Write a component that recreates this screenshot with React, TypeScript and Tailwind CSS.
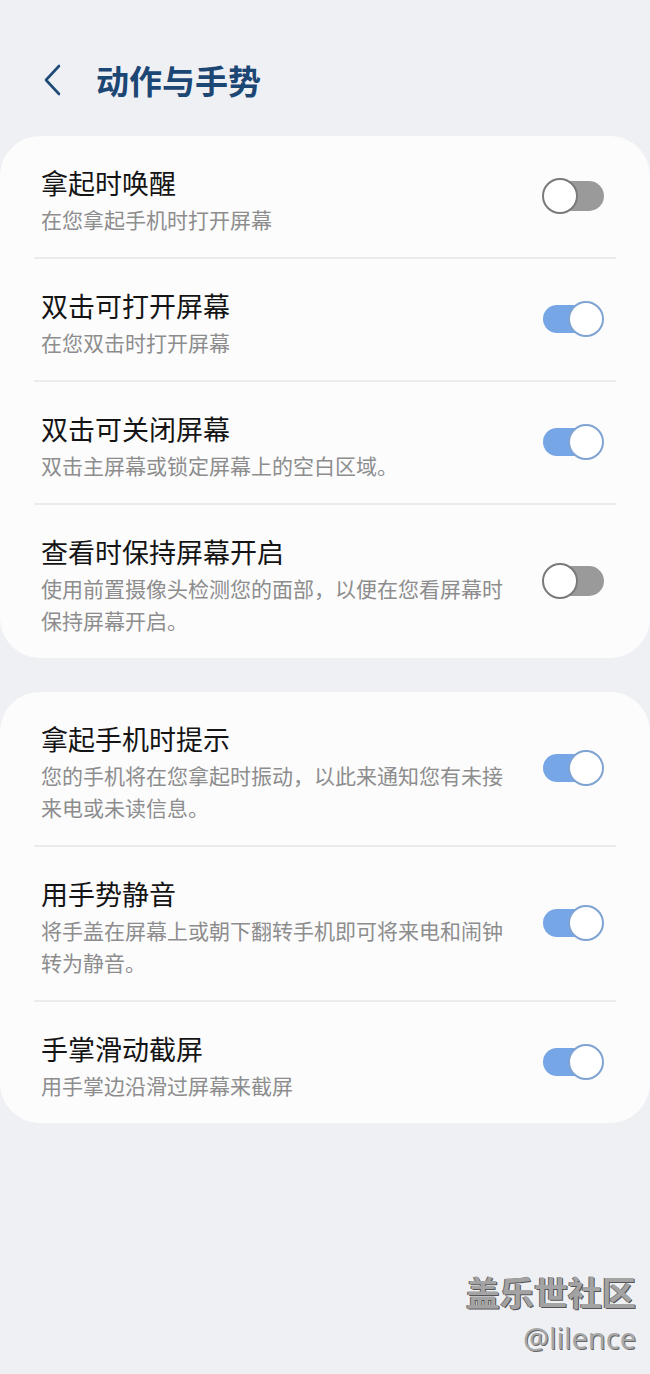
import React from "react";

type Item = { title: string; desc: string; on: boolean };

const group1: Item[] = [
  { title: "拿起时唤醒", desc: "在您拿起手机时打开屏幕", on: false },
  { title: "双击可打开屏幕", desc: "在您双击时打开屏幕", on: true },
  { title: "双击可关闭屏幕", desc: "双击主屏幕或锁定屏幕上的空白区域。", on: true },
  { title: "查看时保持屏幕开启", desc: "使用前置摄像头检测您的面部，以便在您看屏幕时保持屏幕开启。", on: false },
];

const group2: Item[] = [
  { title: "拿起手机时提示", desc: "您的手机将在您拿起时振动，以此来通知您有未接来电或未读信息。", on: true },
  { title: "用手势静音", desc: "将手盖在屏幕上或朝下翻转手机即可将来电和闹钟转为静音。", on: true },
  { title: "手掌滑动截屏", desc: "用手掌边沿滑过屏幕来截屏", on: true },
];

function Toggle({ on }: { on: boolean }) {
  if (on) {
    return (
      <div className="relative mb-[8px] h-[36px] w-[62px] shrink-0">
        <div className="absolute left-[1px] top-[4px] h-[28px] w-[56px] rounded-full bg-[#76a6e6]" />
        <div className="absolute right-0 top-0 h-[36px] w-[36px] rounded-full border-2 border-[#7fa3d2] bg-white" />
      </div>
    );
  }
  return (
    <div className="relative mb-[8px] h-[36px] w-[62px] shrink-0">
      <div className="absolute right-0 top-[3px] h-[30px] w-[56px] rounded-full bg-[#9a9a9a]" />
      <div className="absolute left-0 top-0 h-[36px] w-[36px] rounded-full border-2 border-[#7a7a7a] bg-white" />
    </div>
  );
}

function Row({ item, last }: { item: Item; last: boolean }) {
  return (
    <div>
      <div className="flex items-center pl-[41px] pr-[46px] pt-[29px] pb-[22px]">
        <div className="flex-1 pr-[30px]">
          <div className="text-[27px] leading-[36px] text-[#141414]">{item.title}</div>
          <div className="mt-[2px] text-[21px] leading-[32px] text-[#8d8d8d]">{item.desc}</div>
        </div>
        <Toggle on={item.on} />
      </div>
      {!last && <div className="mx-[34px] h-[2px] bg-[#ebebed]" />}
    </div>
  );
}

function Card({ items }: { items: Item[] }) {
  return (
    <div className="rounded-[40px] bg-[#fcfcfd]">
      {items.map((it, i) => (
        <Row key={it.title} item={it} last={i === items.length - 1} />
      ))}
    </div>
  );
}

export default function App() {
  return (
    <div
      className="relative h-[1374px] w-[650px] overflow-hidden bg-[#eff0f4]"
      style={{ fontFamily: '"Noto Sans CJK SC", "Noto Sans", sans-serif' }}
    >
      <div className="flex h-[136px] items-start pt-[60px]">
        <div className="flex h-[40px] items-center pl-[43px]">
          <svg width="20" height="32" viewBox="0 0 20 32" fill="none">
            <path d="M16 2 L3 16 L16 30" stroke="#1e4a78" strokeWidth="2.6" strokeLinecap="round" strokeLinejoin="round" />
          </svg>
        </div>
        <div className="ml-[33px] h-[40px] text-[33px] font-bold leading-[40px] text-[#1c4673]">动作与手势</div>
      </div>

      <Card items={group1} />
      <div className="h-[34px]" />
      <Card items={group2} />

      <div className="absolute right-[14px] top-[1270px] flex flex-col items-end">
        <div className="text-[34px] font-bold leading-[44px] text-[#a3a3a3] [text-shadow:1px_1px_0_#555,-1px_0_0_#666]">
          盖乐世社区
        </div>
        <div
          className="mt-[6px] text-[29px] leading-[36px] text-[#a8a8a8] [text-shadow:1px_1px_0_#666]"
          style={{ fontFamily: '"Noto Sans", sans-serif' }}
        >
          @lilence
        </div>
      </div>
    </div>
  );
}
